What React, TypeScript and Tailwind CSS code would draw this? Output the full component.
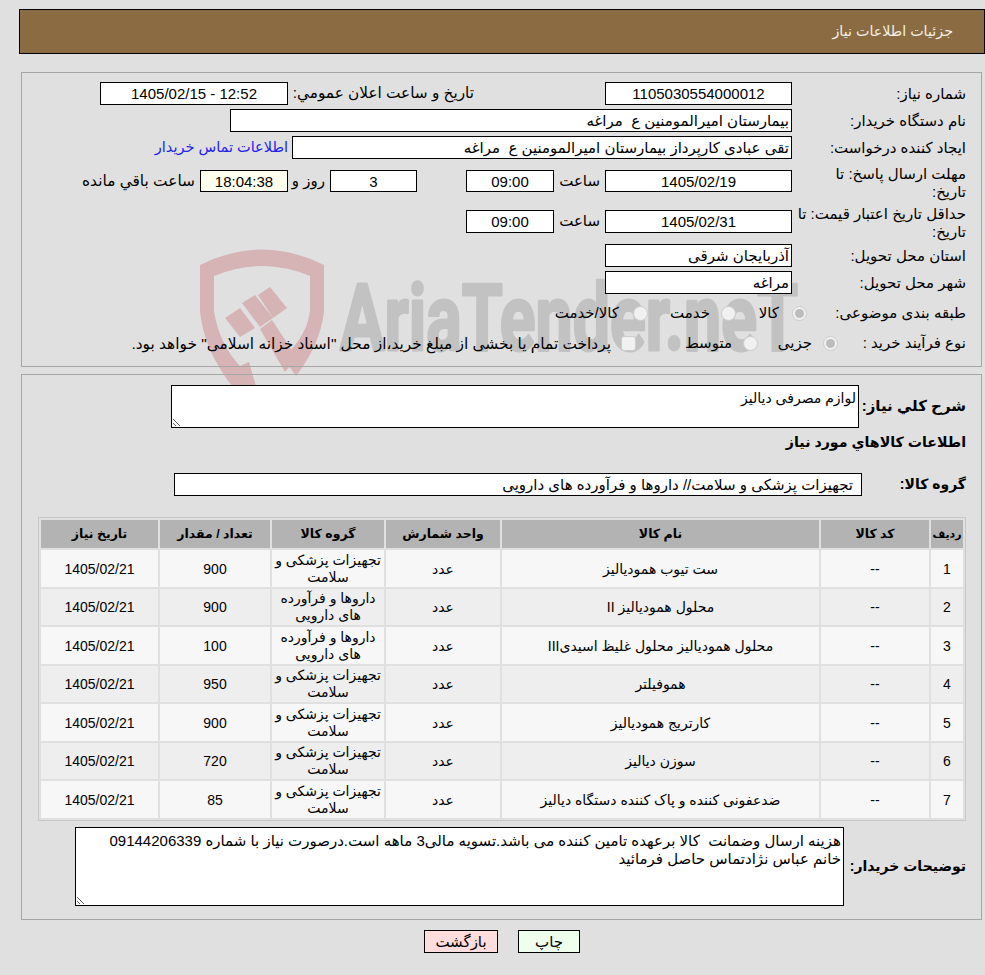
const font = "[font-family:'Liberation_Sans','DejaVu_Sans',sans-serif]"

const rows = [
  { id: 1, name: 'ست تیوب همودیالیز', group: 'تجهیزات پزشکی و سلامت', qty: '900' },
  { id: 2, name: 'محلول همودیالیز II', group: 'داروها و فرآورده های دارویی', qty: '900' },
  { id: 3, name: 'محلول همودیالیز محلول غلیظ اسیدیIII', group: 'داروها و فرآورده های دارویی', qty: '100' },
  { id: 4, name: 'هموفیلتر', group: 'تجهیزات پزشکی و سلامت', qty: '950' },
  { id: 5, name: 'کارتریج همودیالیز', group: 'تجهیزات پزشکی و سلامت', qty: '900' },
  { id: 6, name: 'سوزن دیالیز', group: 'تجهیزات پزشکی و سلامت', qty: '720' },
  { id: 7, name: 'ضدعفونی کننده و پاک کننده دستگاه دیالیز', group: 'تجهیزات پزشکی و سلامت', qty: '85' },
]

function Box({ className, children }: { className: string; children?: React.ReactNode }) {
  return (
    <div className={`h-[23px] shrink-0 border border-black bg-white flex items-center justify-center text-[15px] leading-none whitespace-pre ${className}`}>
      {children}
    </div>
  )
}

function Label({ children, className = '' }: { children: React.ReactNode; className?: string }) {
  return <div className={`w-[174px] pl-[4px] shrink-0 text-[15px] leading-[18px] ${className}`}>{children}</div>
}

function Radio({ on }: { on?: boolean }) {
  return (
    <span className="w-[15px] h-[15px] shrink-0 rounded-full border border-[#cccccc] bg-[#f1f1f1] flex items-center justify-center">
      {on && <span className="w-[9px] h-[9px] rounded-full bg-[#bcbcbc]" />}
    </span>
  )
}

function Watermark() {
  return (
    <svg className="absolute left-0 top-0 pointer-events-none [direction:ltr]" width="985" height="400" viewBox="0 0 985 400">
      <g fill="#d6b4b6">
        <path d="M200 265 Q262 234 324 265 L324 312 Q320 345 296 376 L283 358 Q308 335 310 310 L310 276 Q262 256 214 276 L214 312 Q220 345 240 366 L249 362 L256 386 L232 386 Q204 350 200 312 Z" />
        <path d="M225 318 L240 308 L255 328 L240 337 Z" />
        <path d="M242 303 L255 295 L273 318 L260 327 Z" />
        <path d="M258 295 L270 287 L287 308 L273 318 Z" />
        <path d="M260 329 L272 320 L297 358 L285 372 Z" />
      </g>
      <text x="340" y="350" textLength="458" lengthAdjust="spacingAndGlyphs" fontFamily="Roboto, sans-serif" fontWeight="700" fontSize="92" fill="#c2c2c2" stroke="#c2c2c2" strokeWidth="3" strokeLinejoin="round">
        AriaTender.neT
      </text>
    </svg>
  )
}

export default function App() {
  return (
    <div dir="rtl" className={`relative h-[975px] overflow-hidden bg-[#e0e0e0] text-[15px] text-black ${font}`}>
      <Watermark />
      <div className="relative">
        <div className="mt-[9px] ml-[19px] h-[45px] border border-black bg-[#8b6c42] flex items-center pr-[31px] text-[14.3px] text-[#f2f0e6] absolute left-0 right-0 top-0">
          جزئیات اطلاعات نیاز
        </div>

        <div className="h-[72px]" />

        <div className="ml-[21px] mr-[3px] h-[295px] border border-[#a6a6a6] pr-[15px] pt-[9px]">
          <div className="flex items-center h-[23px]">
            <Label>شماره نیاز:</Label>
            <Box className="w-[187px]">1105030554000012</Box>
            <div className="mr-[131px] w-[186px] text-[15.3px] whitespace-nowrap">تاریخ و ساعت اعلان عمومي:</div>
            <Box className="w-[188px]"><span dir="ltr">1405/02/15 - 12:52</span></Box>
          </div>
          <div className="flex items-center h-[23px] mt-[4px]">
            <Label>نام دستگاه خریدار:</Label>
            <Box className="w-[562px] !justify-start pr-[2px]">بیمارستان امیرالمومنین ع  مراغه</Box>
          </div>
          <div className="flex items-center h-[23px] mt-[4px]">
            <Label>ایجاد کننده درخواست:</Label>
            <Box className="w-[500px] !justify-start pr-[2px]">تقی عبادی کارپرداز بیمارستان امیرالمومنین ع  مراغه</Box>
            <a className="mr-[4px] text-[14.5px] text-[#2222ee] whitespace-nowrap">اطلاعات تماس خریدار</a>
          </div>
          <div className="flex items-center h-[22px] mt-[11px]">
            <Label className="mt-[3px]">مهلت ارسال پاسخ: تا<br />تاریخ:</Label>
            <Box className="w-[187px] !h-[22px]">1405/02/19</Box>
            <div className="w-[51px] pr-[5px]">ساعت</div>
            <Box className="w-[88px] !h-[22px]">09:00</Box>
            <div className="w-[49px]" />
            <Box className="w-[87px] !h-[22px]">3</Box>
            <div className="w-[42px] pr-[5px] whitespace-nowrap">روز و</div>
            <Box className="w-[88px] !h-[22px] !bg-[#ffffee]">18:04:38</Box>
            <div className="pr-[5px] text-[15.4px] whitespace-nowrap">ساعت باقي مانده</div>
          </div>
          <div className="flex items-center h-[23px] mt-[18px]">
            <Label className="mt-[3px]">حداقل تاریخ اعتبار قیمت: تا<br />تاریخ:</Label>
            <Box className="w-[187px]">1405/02/31</Box>
            <div className="w-[51px] pr-[5px]">ساعت</div>
            <Box className="w-[88px]">09:00</Box>
          </div>
          <div className="flex items-center h-[23px] mt-[11px]">
            <Label>استان محل تحویل:</Label>
            <Box className="w-[187px] !justify-start pr-[2px]">آذربایجان شرقی</Box>
          </div>
          <div className="flex items-center h-[23px] mt-[4px]">
            <Label>شهر محل تحویل:</Label>
            <Box className="w-[187px] !justify-start pr-[2px]">مراغه</Box>
          </div>
          <div className="flex items-center h-[23px] mt-[8px]">
            <div className="w-[159px] shrink-0">طبقه بندی موضوعی:</div>
            <Radio on />
            <div className="w-[56px] pr-[13px]">کالا</div>
            <Radio />
            <div className="w-[73px] pr-[11px]">خدمت</div>
            <Radio />
            <div className="pr-[14px]">کالا/خدمت</div>
          </div>
          <div className="flex items-center h-[23px] mt-[7px]">
            <div className="w-[128px] shrink-0">نوع فرآیند خرید :</div>
            <Radio on />
            <div className="w-[65px] pr-[11px]">جزیی</div>
            <Radio />
            <div className="w-[107px] pr-[11px]">متوسط</div>
            <span className="w-[15px] h-[15px] shrink-0 rounded-[3px] border border-[#cccccc] bg-[#f1f1f1]" />
            <div className="pr-[10px] text-[15.4px] whitespace-nowrap">پرداخت تمام یا بخشی از مبلغ خرید،از محل "اسناد خزانه اسلامی" خواهد بود.</div>
          </div>
        </div>

        <div className="mt-[7px] ml-[21px] mr-[3px] h-[546px] border border-[#a6a6a6] pr-[15px] pt-[10px]">
          <div className="flex items-center">
            <div className="w-[107px] shrink-0 font-bold text-[15px]">شرح کلي نیاز:</div>
            <textarea
              dir="rtl"
              readOnly
              defaultValue="لوازم مصرفی دیالیز"
              className="w-[688px] h-[43px] border border-black bg-white text-[14px] leading-[18px] px-[2px] py-[3px] outline-none"
            />
          </div>
          <div className="h-[16px] mt-[7px] flex items-center font-bold text-[14.2px]">اطلاعات کالاهاي مورد نیاز</div>
          <div className="flex items-center mt-[22px]">
            <div className="w-[104px] shrink-0 font-bold text-[14px]">گروه کالا:</div>
            <Box className="w-[688px] !justify-start pr-[8px]">تجهیزات پزشکی و سلامت// داروها و فرآورده های دارویی</Box>
          </div>

          <table className="mt-[21px] w-[928px] table-fixed border-separate border-spacing-[2px] border border-[#c8c8c8] text-center text-[14px] leading-[17px]">
            <colgroup>
              <col className="w-[32px]" />
              <col className="w-[108px]" />
              <col className="w-[317px]" />
              <col className="w-[114px]" />
              <col className="w-[112px]" />
              <col className="w-[110px]" />
              <col className="w-[117px]" />
            </colgroup>
            <thead>
              <tr className="h-[28px] bg-[#b3b3b3]">
                <th className="p-0 font-bold text-[11px] whitespace-nowrap">ردیف</th>
                {['کد کالا', 'نام کالا', 'واحد شمارش', 'گروه کالا', 'تعداد / مقدار', 'تاریخ نیاز'].map((h) => (
                  <th key={h} className="p-0 font-bold text-[12.5px] whitespace-nowrap">{h}</th>
                ))}
              </tr>
            </thead>
            <tbody>
              {rows.map((r, i) => (
                <tr key={r.id} className={`h-[36.5px] ${i % 2 === 0 ? 'bg-[#f7f7f7]' : 'bg-[#eeeeee]'}`}>
                  <td className="p-0 pt-[2px]">{r.id}</td>
                  <td className="p-0 pt-[2px]">--</td>
                  <td className="p-0 pt-[2px]">{r.name}</td>
                  <td className="p-0 pt-[2px]">عدد</td>
                  <td className="p-0 pt-[1px]">{r.group}</td>
                  <td className="p-0 pt-[2px]">{r.qty}</td>
                  <td className="p-0 pt-[2px]">1405/02/21</td>
                </tr>
              ))}
            </tbody>
          </table>

          <div className="flex items-center mt-[6px]">
            <div className="w-[122px] shrink-0 font-bold text-[14px] whitespace-nowrap">توضیحات خریدار:</div>
            <textarea
              dir="rtl"
              readOnly
              defaultValue="هزینه ارسال وضمانت  کالا برعهده تامین کننده می باشد.تسویه مالی3 ماهه است.درصورت نیاز با شماره 09144206339 خانم عباس نژادتماس حاصل فرمائید"
              className="w-[769px] h-[79px] border border-black bg-white text-[15px] leading-[18px] px-[2px] py-[4px] outline-none"
            />
          </div>
        </div>

        <div dir="ltr" className="flex justify-center gap-[20px] pl-[19px] mt-[10px]">
          <button className="w-[74px] h-[23px] border border-black bg-[#ffdddd] text-[15px]">بازگشت</button>
          <button className="w-[62px] h-[23px] border border-black bg-[#eeffee] text-[15px]">چاپ</button>
        </div>
      </div>
    </div>
  )
}
